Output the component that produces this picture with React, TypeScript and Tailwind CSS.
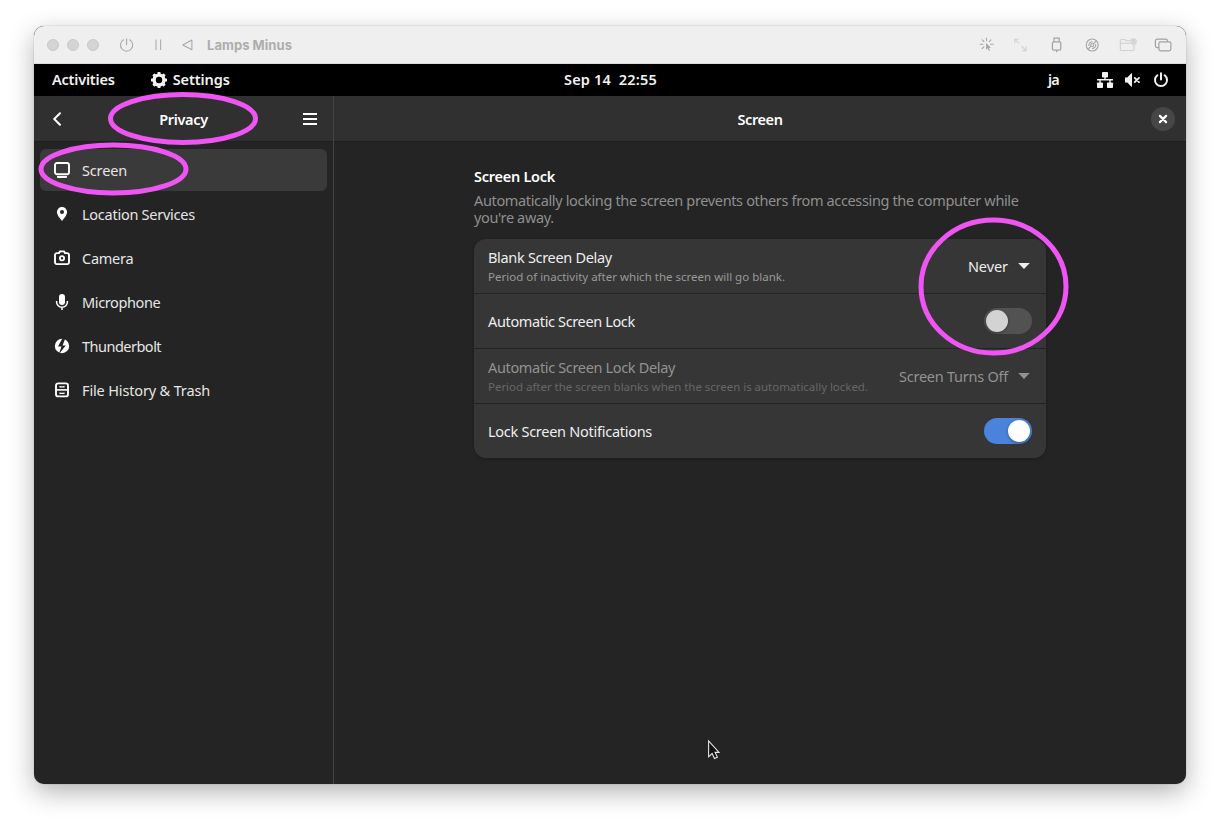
import React from 'react';

const GEAR_TEETH = [0, 45, 90, 135, 180, 225, 270, 315];

function GearIcon() {
  return (
    <svg width="16" height="16" viewBox="0 0 16 16" className="shrink-0">
      <circle cx="8" cy="8" r="4.9" fill="none" stroke="#f2f2f2" strokeWidth="3.4" />
      {GEAR_TEETH.map((a) => (
        <rect key={a} x="6.4" y="0" width="3.2" height="3.2" rx="0.7" fill="#f2f2f2" transform={`rotate(${a} 8 8)`} />
      ))}
    </svg>
  );
}

function TitleBar() {
  return (
    <div className="flex h-[38px] shrink-0 items-center border-b border-[#dcdcdc] bg-[#efefef] pl-[13px] pr-[14px] pt-px text-[#b3b3b3]">
      <div className="flex gap-2">
        <span className="size-3 rounded-full border border-[#c9c9c9] bg-[#d4d4d4]" />
        <span className="size-3 rounded-full border border-[#c9c9c9] bg-[#d4d4d4]" />
        <span className="size-3 rounded-full border border-[#c9c9c9] bg-[#d4d4d4]" />
      </div>
      <svg className="ml-5" width="15" height="14" viewBox="0 0 15 14" fill="none" stroke="#a9a9a9" strokeWidth="1.1" strokeLinecap="round">
        <path d="M7.6 0.7v6M4.6 1.8a6.1 6.1 0 1 0 6 0" />
      </svg>
      <svg className="ml-[20px]" width="8" height="12" viewBox="0 0 8 12" stroke="#adadad" strokeWidth="1.1">
        <path d="M2 0.5v10.5M6.6 0.5v10.5" />
      </svg>
      <svg className="ml-[19px]" width="12" height="12" viewBox="0 0 12 12" fill="none" stroke="#a9a9a9" strokeWidth="1.1" strokeLinejoin="round">
        <path d="M10.9 1.1v9.6L1.8 5.9z" />
      </svg>
      <span className="ml-[14px] whitespace-nowrap pt-px font-['Inter',sans-serif] text-[13px] font-bold tracking-[0.05px] text-[#adadad]">Lamps Minus</span>
      <div className="ml-auto flex items-center">
        <svg width="16" height="16" viewBox="0 0 16 16" fill="none" stroke="#a6a6a6" strokeWidth="1.1" strokeLinecap="round">
          <path d="M8.5 1v2.6M4.2 2.9l1.7 1.7M12.9 2.9l-1.7 1.7M2.2 7.2h2.6M12.6 7.2h2.6M4.2 11.5l1.7-1.7" />
          <path d="M8 6l4.9 4.8-2 .1 1.1 2.6-1.1.5-1.1-2.7-1.7 1.5z" fill="#a6a6a6" stroke="none" />
        </svg>
        <svg className="ml-[19px]" width="14" height="14" viewBox="0 0 14 14" fill="none" stroke="#d2d2d2" strokeWidth="1.1">
          <path d="M1.7 5.2V1.2h4M1.7 1.2l4.5 4.5M13.1 8.6v4H9.1M13.1 12.6L8.5 8" />
        </svg>
        <svg className="ml-[23px]" width="12" height="16" viewBox="0 0 12 16" fill="none" stroke="#a2a2a2" strokeWidth="1.2">
          <rect x="2.4" y="4.8" width="8.4" height="8.4" rx="1.4" />
          <path d="M4 4.8V1.2h5.2v3.6M6.6 13.2v2" />
        </svg>
        <svg className="ml-[23px]" width="14" height="14" viewBox="0 0 14 14" fill="none" stroke="#a6a6a6" strokeWidth="1.1">
          <circle cx="7.2" cy="7" r="6" />
          <circle cx="7.2" cy="7" r="1.5" />
          <path d="M6.1 8.1L3.3 10.9M8.3 5.9l2.8-2.8M4 8A3.6 3.6 0 0 1 7.4 3.6M10.6 6a3.6 3.6 0 0 1-3.6 4.5" />
        </svg>
        <svg className="ml-5" width="18" height="14" viewBox="0 0 18 14" fill="none" stroke="#d0d0d0" strokeWidth="1.1">
          <path d="M11 2.8H7.2L6 1.5H2.5A1.2 1.2 0 0 0 1.3 2.7v8.6a1.2 1.2 0 0 0 1.2 1.2h11.3a1.2 1.2 0 0 0 1.2-1.2V7M1.3 5.2h10" />
          <circle cx="14.5" cy="3.6" r="2.7" />
          <circle cx="14.5" cy="2.9" r="0.8" fill="#d0d0d0" />
          <path d="M13 5.4q1.5-1.5 3 0" />
        </svg>
        <svg className="ml-[17px]" width="18" height="14" viewBox="0 0 18 14" fill="none" stroke="#a2a2a2" strokeWidth="1.2">
          <path d="M4.9 9.6H3.3A1.9 1.9 0 0 1 1.4 7.7V3A1.9 1.9 0 0 1 3.3 1.1h8.3A1.9 1.9 0 0 1 13.5 3v.8" />
          <rect x="4.9" y="3.8" width="12" height="9" rx="1.8" />
        </svg>
      </div>
    </div>
  );
}

function TopBar() {
  return (
    <div className="grid h-8 shrink-0 grid-cols-[530px_1fr_138px] items-center bg-black text-[14.5px] font-semibold text-[#f2f2f2]">
      <div className="flex items-center pl-[18px]">
        <span className="tracking-[-0.2px]">Activities</span>
        <span className="ml-[36px] flex items-center">
          <GearIcon />
          <span className="ml-[6px] tracking-[-0.1px]">Settings</span>
        </span>
      </div>
      <span className="whitespace-pre tracking-[0.18px]">Sep 14  22:55</span>
      <div className="flex items-center">
        <span className="w-[12px] tracking-[-0.8px]">ja</span>
        <svg className="ml-[36px]" width="18" height="16" viewBox="0 0 18 16" fill="#f2f2f2">
          <rect x="6" y="0" width="6" height="5.5" rx="0.8" />
          <rect x="1" y="10.5" width="6" height="5.5" rx="0.8" />
          <rect x="11" y="10.5" width="6" height="5.5" rx="0.8" />
          <path d="M8.3 5h1.4v2H17v1.4h-2.3V11h-1.4V8.4H4.7V11H3.3V8.4H1V7h7.3z" />
        </svg>
        <svg className="ml-[10px]" width="17" height="16" viewBox="0 0 17 16" fill="#f2f2f2">
          <path d="M1 5.4h2.3L7.4 1.3H8v13.4h-.6L3.3 10.6H1z" />
          <path d="M10.7 5.9l4.3 4.3M15 5.9l-4.3 4.3" stroke="#f2f2f2" strokeWidth="1.8" strokeLinecap="round" />
        </svg>
        <svg className="ml-[12px]" width="16" height="16" viewBox="0 0 16 16" fill="none" stroke="#f2f2f2" strokeWidth="2" strokeLinecap="round">
          <path d="M8 1.2v6.3M4.4 3.3a6 6 0 1 0 7.2 0" />
        </svg>
      </div>
    </div>
  );
}

const NAV = [
  {
    label: 'Screen',
    spacing: 'tracking-[-0.16px]',
    icon: (
      <>
        <rect x="1" y="1" width="14" height="11.2" rx="2" fill="none" stroke="#fff" strokeWidth="1.9" />
        <path d="M3 14h10v1.1q0 .9-1 .9H4q-1 0-1-.9z" fill="#fff" />
      </>
    ),
  },
  {
    label: 'Location Services',
    spacing: 'tracking-[-0.26px]',
    icon: <path fillRule="evenodd" fill="#fff" d="M8 1a5 5 0 0 1 5.1 5c0 3.2-3 6.2-5.1 9C5.9 12.2 2.9 9.2 2.9 6A5 5 0 0 1 8 1zM8 3.9a2 2 0 1 0 0 4 2 2 0 0 0 0-4z" />,
  },
  {
    label: 'Camera',
    spacing: 'tracking-[-0.26px]',
    icon: (
      <>
        <path d="M3 3.1h2l1-1.7h4l1 1.7h2A2 2 0 0 1 15 5.1v7.2a1.8 1.8 0 0 1-1.8 1.8H2.8A1.8 1.8 0 0 1 1 12.3V5.1a2 2 0 0 1 2-2z" fill="none" stroke="#fff" strokeWidth="1.9" />
        <circle cx="8" cy="8.2" r="2.1" fill="none" stroke="#fff" strokeWidth="1.8" />
      </>
    ),
  },
  {
    label: 'Microphone',
    spacing: 'tracking-[-0.38px]',
    icon: (
      <>
        <rect x="5" y="0" width="6" height="11" rx="3" fill="#fff" />
        <path d="M2.6 7v.9a5.4 5.4 0 0 0 10.8 0V7M8 13v3" fill="none" stroke="#fff" strokeWidth="1.5" />
      </>
    ),
  },
  {
    label: 'Thunderbolt',
    spacing: 'tracking-[-0.51px]',
    icon: (
      <>
        <circle cx="8" cy="8" r="7.2" fill="#fff" />
        <path d="M8.6 0L4 8.6h3.5L4.8 16.2l7-8.8H8.6L11.4 0z" fill="#242424" />
      </>
    ),
  },
  {
    label: 'File History & Trash',
    spacing: 'tracking-[-0.15px]',
    icon: (
      <>
        <rect x="2" y="1.4" width="12" height="13" rx="2.2" fill="none" stroke="#fff" strokeWidth="1.9" />
        <path d="M2 7.9h12" stroke="#fff" strokeWidth="1.6" />
        <path d="M6 4v.9h4V4M6 10.5v.9h4v-.9" fill="none" stroke="#fff" strokeWidth="1.2" />
      </>
    ),
  },
];

function Sidebar() {
  return (
    <aside className="flex w-[300px] shrink-0 flex-col border-r border-[#454545]">
      <header className="flex h-[46px] shrink-0 items-center border-b border-[#1f1f1f] bg-[#303030] pl-[18px] pr-4 pt-px">
        <svg width="12" height="16" viewBox="0 0 12 16" fill="none" stroke="#fff" strokeWidth="2" strokeLinecap="round" strokeLinejoin="round">
          <path d="M8 2.2L2.2 8 8 13.8" />
        </svg>
        <h1 className="flex-1 pt-px text-center text-[14.5px] font-semibold tracking-[-0.36px] text-white">Privacy</h1>
        <svg width="14" height="14" viewBox="0 0 14 14" fill="#fff">
          <path d="M0 1h14v2H0zM0 6h14v2H0zM0 11h14v2H0z" />
        </svg>
      </header>
      <nav className="flex flex-col gap-[2px] px-[6px] pt-[7px]">
        {NAV.map((n, i) => (
          <div key={n.label} className={`flex h-[42px] items-center rounded-md pl-[14px] ${i === 0 ? 'bg-[#3a3a3a]' : ''}`}>
            <svg width="16" height="16" viewBox="0 0 16 16">{n.icon}</svg>
            <span className={`ml-3 whitespace-nowrap text-[14.5px] leading-5 text-[#e6e6e6] ${n.spacing}`}>{n.label}</span>
          </div>
        ))}
      </nav>
    </aside>
  );
}

function Dropdown({ label, spacing }: { label: string; spacing: string }) {
  return (
    <div className="flex items-center pr-4">
      <span className={`text-[14.5px] leading-5 ${spacing}`}>{label}</span>
      <svg className="ml-[10px]" width="12" height="8" viewBox="0 0 12 8" fill="currentColor">
        <path d="M0.2 0.9h11.6L6 7.1z" />
      </svg>
    </div>
  );
}

function Toggle({ on }: { on: boolean }) {
  return (
    <span className={`mr-[14px] flex h-[26px] w-12 items-center rounded-full px-[2px] ${on ? 'justify-end bg-[#4a82dc]' : 'bg-[#525252]'}`}>
      <span className={`size-[22px] rounded-full shadow-[0_1px_3px_rgba(0,0,0,0.35)] ${on ? 'bg-white' : 'bg-[#d3d3d3]'}`} />
    </span>
  );
}

function LockSettings() {
  return (
    <section className="ml-[140px] mt-[24px] w-[572px]">
      <h2 className="text-[14.5px] font-semibold leading-5 tracking-[-0.26px] text-white">Screen Lock</h2>
      <p className="mt-[6px] w-[560px] text-[14.5px] leading-[17px] tracking-[-0.355px] text-[#8f8f8f]">
        Automatically locking the screen prevents others from accessing the computer while you're away.
      </p>
      <div className="mt-[13px] divide-y divide-[#242424] rounded-xl bg-[#363636] text-[#eeeeee] shadow-[0_1px_3px_rgba(0,0,0,0.25)]">
        <div className="flex h-[55px] items-center justify-between pl-[14px]">
          <div className="flex flex-col pt-[2px]">
            <span className="text-[14.5px] leading-[19px] tracking-[-0.31px]">Blank Screen Delay</span>
            <span className="pt-px text-[11.5px] leading-[18px] tracking-[0.005px] text-[#999999]">Period of inactivity after which the screen will go blank.</span>
          </div>
          <Dropdown label="Never" spacing="tracking-[-0.07px]" />
        </div>
        <div className="flex h-[55px] items-center justify-between pl-[14px]">
          <span className="text-[14.5px] leading-5 tracking-[-0.36px]">Automatic Screen Lock</span>
          <Toggle on={false} />
        </div>
        <div className="flex h-[55px] items-center justify-between pl-[14px] text-[#929292]">
          <div className="flex flex-col pt-[2px]">
            <span className="text-[14.5px] leading-[19px] tracking-[-0.34px]">Automatic Screen Lock Delay</span>
            <span className="pt-px text-[11.5px] leading-[18px] tracking-[-0.03px] text-[#676767]">Period after the screen blanks when the screen is automatically locked.</span>
          </div>
          <Dropdown label="Screen Turns Off" spacing="tracking-[-0.25px]" />
        </div>
        <div className="flex h-[54px] items-center justify-between pl-[14px]">
          <span className="text-[14.5px] leading-5 tracking-[-0.27px]">Lock Screen Notifications</span>
          <Toggle on />
        </div>
      </div>
    </section>
  );
}

export default function App() {
  return (
    <div className="relative h-[826px] w-[1220px] overflow-hidden bg-white px-[34px] pt-[26px] font-['Noto_Sans','Open_Sans',sans-serif]">
      <div className="flex h-[758px] w-[1152px] flex-col overflow-hidden rounded-[10px] bg-[#242424] shadow-[0_0_1px_rgba(0,0,0,0.5),0_8px_26px_rgba(0,0,0,0.3)]">
        <TitleBar />
        <TopBar />
        <div className="flex min-h-0 flex-1">
          <Sidebar />
          <main className="flex flex-1 flex-col">
            <header className="flex h-[46px] shrink-0 items-center border-b border-[#1f1f1f] bg-[#303030] pl-[35px] pr-[11px] pt-px">
              <h1 className="flex-1 pt-px text-center text-[14.5px] font-semibold tracking-[-0.4px] text-white">Screen</h1>
              <span className="flex size-6 items-center justify-center rounded-full bg-[#464646]">
                <svg width="10" height="10" viewBox="0 0 10 10" stroke="#fff" strokeWidth="2.2" strokeLinecap="round">
                  <path d="M1.9 1.9l6.2 6.2M8.1 1.9L1.9 8.1" />
                </svg>
              </span>
            </header>
            <LockSettings />
          </main>
        </div>
      </div>
      <svg className="pointer-events-none absolute inset-0" width="1220" height="826" viewBox="0 0 1220 826" fill="none">
        <g stroke="#ee55f3" strokeWidth="5">
          <ellipse cx="183" cy="118.5" rx="72.5" ry="24" />
          <ellipse cx="113.5" cy="169" rx="72.5" ry="24" />
          <ellipse cx="993.5" cy="286.5" rx="72.5" ry="66.5" />
        </g>
        <path d="M708.6 741v15.8l3.5-3.3 2.4 5 2.9-1.3-2.3-4.8h3.9z" fill="#111" stroke="#e4e4e4" strokeWidth="1.1" />
      </svg>
    </div>
  );
}
